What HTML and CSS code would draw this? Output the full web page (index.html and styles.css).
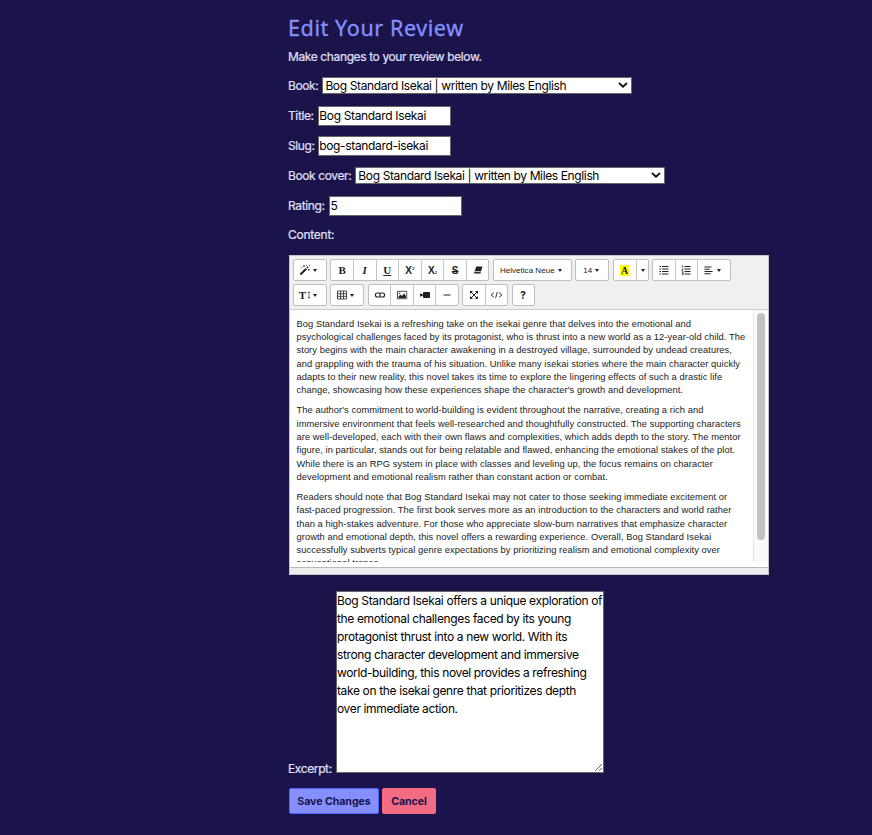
FILE: index.html
```html
<!DOCTYPE html>
<html lang="en">
<head>
<meta charset="utf-8">
<title>Edit Your Review</title>
<link rel="stylesheet" href="styles.css">
</head>
<body>
<main>
<h1>Edit Your Review</h1>
<p class="intro">Make changes to your review below.</p>
<form>
<div class="row"><label for="book">Book:</label><span class="select"><select id="book"><option>Bog Standard Isekai | written by Miles English</option></select><svg viewBox="0 0 10 6"><path d="M1 1l4 3.7L9 1"/></svg></span></div>
<div class="row"><label for="title">Title:</label><input id="title" value="Bog Standard Isekai"></div>
<div class="row slug"><label for="slug">Slug:</label><input id="slug" value="bog-standard-isekai"></div>
<div class="row"><label for="cover">Book cover:</label><span class="select"><select id="cover"><option>Bog Standard Isekai | written by Miles English</option></select><svg viewBox="0 0 10 6"><path d="M1 1l4 3.7L9 1"/></svg></span></div>
<div class="row rating"><label for="rating">Rating:</label><input id="rating" value="5"></div>
<div class="row content-label"><label>Content:</label></div>
<div class="editor">
<div class="toolbar">
<div class="tools">
<div class="group drop"><button type="button"><svg class="ic" viewBox="0 0 12 12"><path d="M1.3 10.5L7.3 4.7" stroke-width="2"/><path d="M8 3.9l1-1" stroke-width="1.6"/><path d="M5 1.2v1.6M4.2 2h1.6M9.8 5v1.6M9 5.8h1.6M10.5.8v1.2M2.2 3.2h1M7.5.8v1" stroke-width=".8"/></svg><i class="caret"></i></button></div>
<div class="group style"><button type="button"><b class="serif">B</b></button><button type="button"><em class="serif">I</em></button><button type="button"><u class="serif">U</u></button><button type="button"><b class="x">X<sup>2</sup></b></button><button type="button"><b class="x">X<sub>2</sub></b></button><button type="button"><s class="strike">S</s></button><button type="button"><svg class="ic" viewBox="0 0 12 12"><path class="fill" d="M4.2 2.5h6.3L8.4 9.6H2z"/><path class="cut" d="M3 7.6h5.7" stroke-width=".8"/></svg></button></div>
<div class="group font"><button type="button">Helvetica Neue<i class="caret"></i></button></div>
<div class="group drop size"><button type="button">14<i class="caret"></i></button></div>
<div class="group color"><button type="button"><b class="mark">A</b></button><button type="button"><i class="caret"></i></button></div>
<div class="group para"><button type="button"><svg class="ic" viewBox="0 0 12 12"><path d="M1.5 2.5H3M1.5 5H3M1.5 7.5H3M1.5 10H3" stroke-width="1.2"/><path d="M4 2.5h6.5M4 5h6.5M4 7.5h6.5M4 10h6.5"/></svg></button><button type="button"><svg class="ic" viewBox="0 0 12 12"><path d="M4.5 2.5h6M4.5 5h6M4.5 7.5h6M4.5 10h6"/><path d="M2 1.7h.8v2.5M1.7 5.2h1.4L1.8 7h1.5M1.7 8h1.4v2.5H1.7M2 9.2h1" stroke-width=".7"/></svg></button><button type="button"><svg class="ic" viewBox="0 0 12 12"><path d="M1.5 3h7M1.5 5.2h5M1.5 7.5h8M1.5 9.7h6" stroke-width="1.1"/></svg><i class="caret"></i></button></div>
</div>
<div class="tools">
<div class="group drop"><button type="button"><b class="serif">T</b><svg class="updown" viewBox="0 0 5 10"><path d="M2.5 1.2v7.6M1 2.5l1.5-1.7L4 2.5M1 7.5l1.5 1.7L4 7.5"/></svg><i class="caret"></i></button></div>
<div class="group drop"><button type="button"><svg class="ic" viewBox="0 0 12 12"><path d="M1.5 2h9v8h-9zM1.5 4.7h9M1.5 7.3h9M4.5 2v8M7.5 2v8" stroke-width=".8"/></svg><i class="caret"></i></button></div>
<div class="group insert"><button type="button"><svg class="ic" viewBox="0 0 12 12"><path d="M5 4H3.4a2 2 0 0 0 0 4H5c.7 0 1.2-.6 1.2-1.4M7 4h1.6a2 2 0 0 1 0 4H7c-.8 0-1.2-.5-1.2-1.5S6.2 4 7 4M5 4c.8 0 1.2.5 1.2 1.2" stroke-width="1.1"/></svg></button><button type="button"><svg class="ic" viewBox="0 0 12 12"><path d="M1.5 2.3h9.2v7.4H1.5z" stroke-width=".8"/><path class="fill" d="M2.5 9V7.5l2-2L6 7l2.2-2.7L9.8 7v2z"/><circle class="fill" cx="3.7" cy="4.2" r=".7"/></svg></button><button type="button"><svg class="ic" viewBox="0 0 12 12"><rect class="fill" x="4" y="3" width="7" height="6" rx=".8"/><path class="fill" d="M1 4.3l3 1.3v1L1 7.8z"/></svg></button><button type="button"><svg class="ic" viewBox="0 0 12 12"><path d="M2.5 6h7"/></svg></button></div>
<div class="group view"><button type="button"><svg class="ic" viewBox="0 0 12 12"><path d="M3 3l6 6M9 3L3 9" stroke-width="1"/><path class="fill" d="M2 2h3L2 5zM10 2v3L7 2zM2 10V7l3 3zM10 10H7l3-3z"/></svg></button><button type="button"><svg class="ic code" viewBox="0 0 14 12"><path d="M4.2 3.5L1.2 6l3 2.5M9.8 3.5l3 2.5-3 2.5M8 2.7L6 9.3"/></svg></button></div>
<div class="group help"><button type="button"><b class="q">?</b></button></div>
</div>
</div>
<div class="editable">
<div class="text">
<p>Bog Standard Isekai is a refreshing take on the isekai genre that delves into the emotional and<br>psychological challenges faced by its protagonist, who is thrust into a new world as a 12-year-old child. The<br>story begins with the main character awakening in a destroyed village, surrounded by undead creatures,<br>and grappling with the trauma of his situation. Unlike many isekai stories where the main character quickly<br>adapts to their new reality, this novel takes its time to explore the lingering effects of such a drastic life<br>change, showcasing how these experiences shape the character's growth and development.</p>
<p>The author's commitment to world-building is evident throughout the narrative, creating a rich and<br>immersive environment that feels well-researched and thoughtfully constructed. The supporting characters<br>are well-developed, each with their own flaws and complexities, which adds depth to the story. The mentor<br>figure, in particular, stands out for being relatable and flawed, enhancing the emotional stakes of the plot.<br>While there is an RPG system in place with classes and leveling up, the focus remains on character<br>development and emotional realism rather than constant action or combat.</p>
<p>Readers should note that Bog Standard Isekai may not cater to those seeking immediate excitement or<br>fast-paced progression. The first book serves more as an introduction to the characters and world rather<br>than a high-stakes adventure. For those who appreciate slow-burn narratives that emphasize character<br>growth and emotional depth, this novel offers a rewarding experience. Overall, Bog Standard Isekai<br>successfully subverts typical genre expectations by prioritizing realism and emotional complexity over<br>conventional tropes.</p>
</div>
<div class="scroll"><div class="thumb"></div></div>
</div>
<div class="statusbar"></div>
</div>
<div class="excerpt"><label for="excerpt">Excerpt:</label><textarea id="excerpt">Bog Standard Isekai offers a unique exploration of
the emotional challenges faced by its young
protagonist thrust into a new world. With its
strong character development and immersive
world-building, this novel provides a refreshing
take on the isekai genre that prioritizes depth
over immediate action.</textarea></div>
<div class="actions"><button class="save" type="button">Save Changes</button><button class="cancel" type="button">Cancel</button></div>
</form>
</main>
</body>
</html>
```
FILE: styles.css
```css
* { box-sizing: border-box; }
body { margin: 0; height: 835px; overflow: hidden; background: #1a144b; color: #e0e0fb; font: 12px/18px Inter, sans-serif; letter-spacing: -.38px; }
main { width: 481px; margin-left: 288px; padding-top: 13px; }
h1 { margin: 0; height: 30px; font: 400 21.5px/30px "Noto Sans", sans-serif; letter-spacing: .6px; color: #8490ff; -webkit-text-stroke: .3px #8490ff; white-space: nowrap; }
.intro { margin: 5px 0; height: 18px; }
.intro, label { -webkit-text-stroke: .2px #e0e0fb; }
.row { display: flex; align-items: center; gap: 4px; height: 30px; white-space: nowrap; }
.row.slug { gap: 3px; }
.row.rating { gap: 5px; }
.row.rating input { padding-left: 0; }
.content-label { height: 34px; padding-bottom: 7px; letter-spacing: -.25px; }
input { width: 133px; height: 20px; padding: 0 0 1px .6px; border: 1px solid #666; border-radius: 0; background: #fff; color: #000; font: inherit; letter-spacing: -.34px; }
.select { position: relative; display: flex; margin-bottom: 1px; }
select { appearance: none; width: 310px; height: 17px; padding: 0 2px; border: 1px solid #666; border-radius: 0; background: #fff; color: #000; font: 12px/15px Inter, sans-serif; letter-spacing: -.37px; }
.select svg { position: absolute; right: 4px; top: 5px; width: 10px; height: 6px; fill: none; stroke: #111; stroke-width: 1.8; }
.editor { display: flex; flex-direction: column; width: 480px; height: 320px; margin-left: 1px; border: 1px solid #c5c5c5; background: #fff; color: #222; font: 9.33px/13.33px "Liberation Sans", sans-serif; letter-spacing: .06px; }
.toolbar { display: flex; flex-direction: column; gap: 3px; height: 54px; padding: 3px 3px 0; border-bottom: 1px solid #ccc; background: #f0f0f0; }
.tools { display: flex; gap: 3.4px; height: 22px; }
.group { display: flex; border: 1px solid #bfbfbf; border-radius: 2px; background: #fff; }
.group button { display: flex; flex: 1; align-items: center; justify-content: center; gap: 2px; min-width: 0; padding: 0; border: 0; background: none; color: #222; font: 8px "Liberation Sans", sans-serif; letter-spacing: 0; white-space: nowrap; }
.group button + button { border-left: 1px solid #c4c4c4; }
.group.font button { padding-right: 3px; letter-spacing: .03px; }
.drop { width: 34px; }
.drop button { padding-right: 4px; }
.group.size button { padding-right: 2px; }
.style { width: 159px; }
.font { width: 79px; }
.color { width: 36px; }
.color button:first-child { flex: 0 0 22px; }
.para { width: 79px; }
.para button { flex: 0 0 22px; }
.para button:last-child { flex: 1; padding-right: 4px; }
.insert { width: 91px; }
.view { width: 46px; }
.help { width: 23px; }
.caret { margin-left: 1px; border: solid transparent; border-width: 3px 2px 0; border-top-color: #222; }
.ic { width: 12px; height: 12px; fill: none; stroke: #222; stroke-width: 1; }
.drop .ic, .para button:last-child .ic { margin-right: -1px; }
.ic.code { width: 13px; }
.ic .fill { fill: #222; stroke: none; }
.ic .cut { stroke: #fff; }
.updown { width: 4px; height: 10px; margin: 0 -1px; fill: none; stroke: #222; stroke-width: .8; }
.serif { font: bold 11px "Liberation Serif", serif; }
em.serif { font-style: italic; }
.x { display: flex; align-items: center; font: bold 10px "Liberation Sans", sans-serif; }
.x sup, .x sub { font: bold 5px "Liberation Serif", serif; }
.x sup { padding-bottom: 4px; }
.x sub { padding-top: 5px; }
.strike { font: bold 10px "Liberation Sans", sans-serif; }
.mark { padding: 0 1px; background: #ff0; font: bold 10px/11px "Liberation Serif", serif; }
.q { font: bold 10px Inter, sans-serif; }
.editable { display: flex; height: 252px; overflow: hidden; }
.text { flex: 1; padding: 7.6px 0 0 6.5px; white-space: nowrap; }
.text p { margin: 0 0 6.67px; }
.scroll { width: 15px; padding: 3px 3px 0; border-left: 1px solid #e4e4e4; background: #fafafa; }
.thumb { width: 8px; height: 227px; border-radius: 4px; background: #c1c1c1; }
.statusbar { margin-top: auto; height: 7px; border-top: 1px solid #b9b9b9; background: #eee; }
.excerpt { display: flex; align-items: flex-end; height: 182px; margin-top: 16px; }
.excerpt label { width: 48px; margin-bottom: -5px; }
textarea { width: 268px; height: 182px; margin: 0; padding: 0; border: 1px solid #666; background: #fff; color: #000; font: 12px/18px Inter, sans-serif; letter-spacing: -.36px; white-space: pre; overflow: hidden; resize: both; }
.actions { display: flex; gap: 3px; margin-top: 15px; }
.actions button { height: 26px; padding: 0; border: 1px solid #5163ff; border-radius: 2px; background: #8490ff; color: #1a144b; font: bold 10.67px Inter, sans-serif; letter-spacing: -.08px; }
.actions .save { width: 90px; margin-left: 1px; }
.actions .cancel { width: 54px; border-color: #f46b82; background: #f46b82; }
```
